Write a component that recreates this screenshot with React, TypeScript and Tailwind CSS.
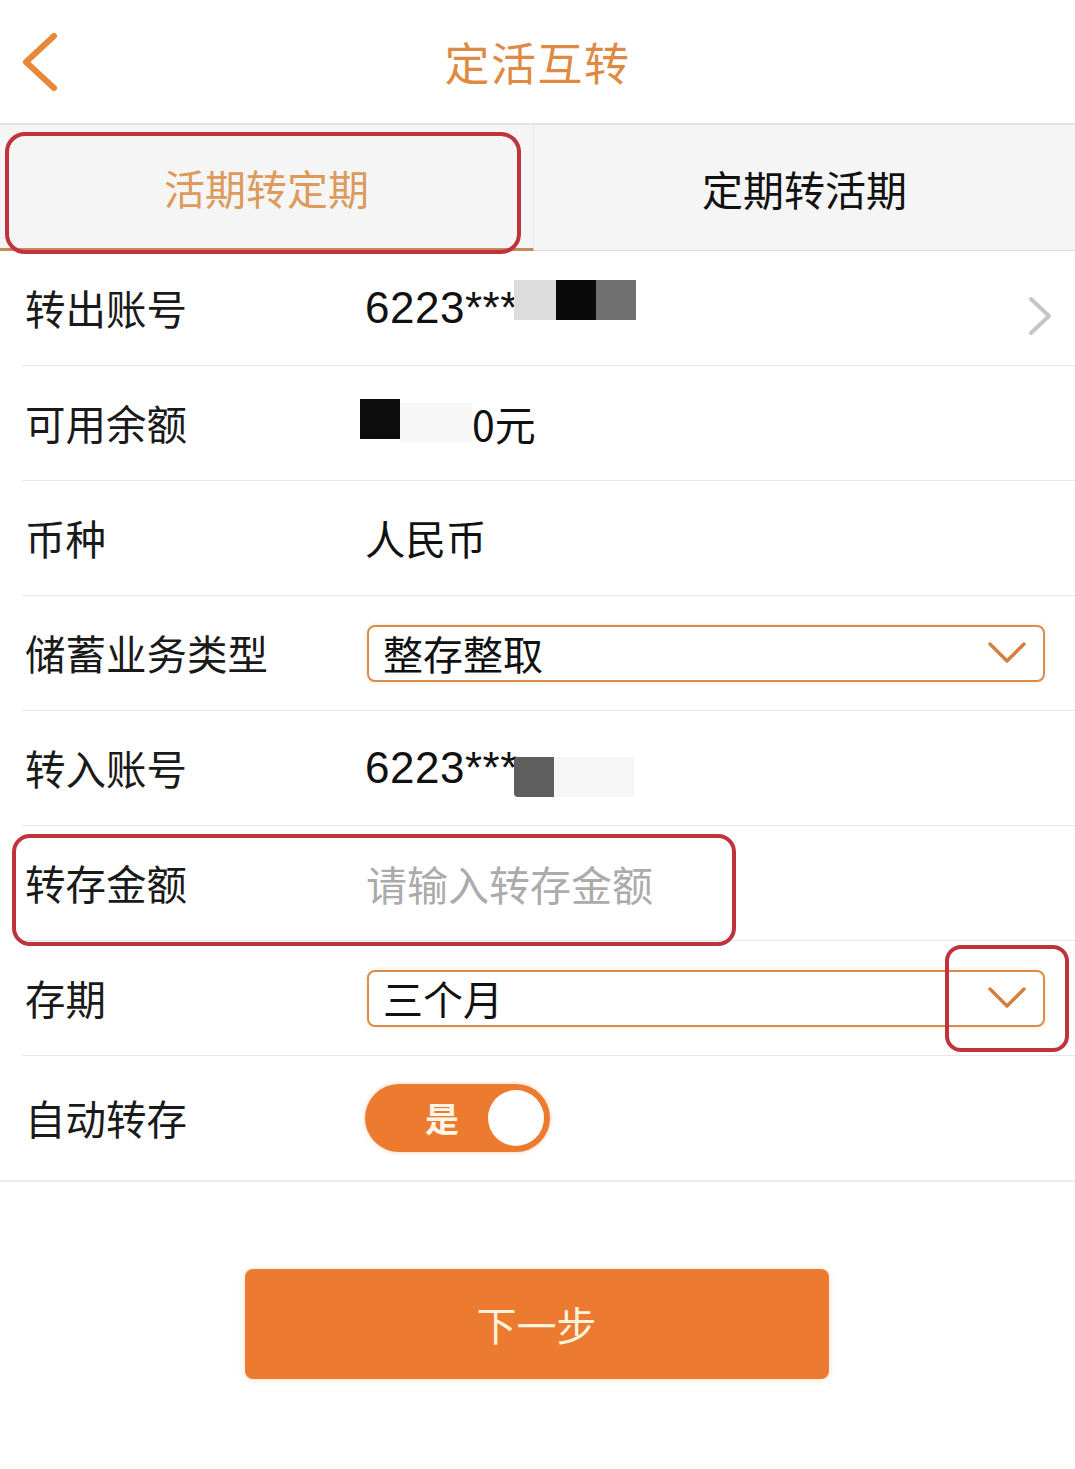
import type { ReactNode } from "react";

const font = { fontFamily: '"Noto Sans CJK SC", "Liberation Sans", sans-serif' };
const digits = { fontFamily: '"Liberation Sans", sans-serif' };

function Row({ label, children, last }: { label: string; children?: ReactNode; last?: boolean }) {
  return (
    <div className={last ? "flex h-[126px] items-center border-b-2 border-[#ececec] pl-[25px]" : "ml-[22px] flex h-[115px] items-center border-b border-[#e6e6e6] pl-[3px]"}>
      <div className="w-[340px] shrink-0 text-[40.5px] leading-none text-[#1a1a1a]">{label}</div>
      <div className="flex min-w-0 flex-1 items-center">{children}</div>
    </div>
  );
}

function Select({ value }: { value: string }) {
  return (
    <div className="flex h-[57px] w-[678px] items-center justify-between rounded-[8px] border-2 border-[#d98c4c] pl-[14px] pr-[16px] shadow-[0_0_4px_rgba(236,140,60,0.25)]">
      <span className="text-[40px] leading-none text-[#111]">{value}</span>
      <svg width="40" height="24" viewBox="0 0 40 24" fill="none">
        <path d="M3 3 L20 20 L37 3" stroke="#d3803f" strokeWidth="3.5" strokeLinecap="round" strokeLinejoin="round" />
      </svg>
    </div>
  );
}

export default function App() {
  return (
    <div className="relative min-h-[1469px] w-[1075px] bg-white" style={font}>
      {/* header */}
      <div className="relative flex h-[125px] items-center justify-center border-b-2 border-[#e4e4e4]">
        <svg className="absolute left-[20px] top-[32px]" width="40" height="60" viewBox="0 0 40 60" fill="none">
          <path d="M34 4 L6 30 L34 56" stroke="#e8883a" strokeWidth="6" strokeLinecap="round" strokeLinejoin="round" />
        </svg>
        <h1 className="text-[45px] font-normal leading-none tracking-[1.5px] text-[#df8a44]">定活互转</h1>
      </div>

      {/* tabs */}
      <div className="flex h-[126px] bg-[#f5f5f5]">
        <div className="flex w-[534px] items-center justify-center border-b-[3px] border-r border-b-[#c98a58] border-r-[#e6e6e6] pt-[2px] text-[41px] leading-none text-[#dc9a5c]">
          活期转定期
        </div>
        <div className="flex flex-1 items-center justify-center border-b border-[#dcdcdc] pt-[2px] text-[41px] leading-none text-[#111]">
          定期转活期
        </div>
      </div>

      <Row label="转出账号">
        <span className="text-[44px] leading-none tracking-[0.5px] text-[#111]" style={digits}>6223***</span>
        <div className="ml-[-4px] mt-[-16px] flex h-[40px]">
          <div className="w-[42px] bg-[#dcdcdc]" />
          <div className="w-[40px] bg-[#0a0a0a]" />
          <div className="w-[40px] bg-[#707070]" />
        </div>
        <svg className="ml-auto mr-[22px] mt-[16px]" width="26" height="40" viewBox="0 0 26 40" fill="none">
          <path d="M4 3 L22 20 L4 37" stroke="#c6c6c6" strokeWidth="4" strokeLinecap="round" strokeLinejoin="round" />
        </svg>
      </Row>

      <Row label="可用余额">
        <div className="ml-[-5px] mt-[-8px] h-[40px] w-[40px] bg-[#0c0c0c]" />
        <div className="h-[40px] w-[72px] bg-[#f7f7f7]" />
        <span className="text-[41px] leading-none text-[#111]">0元</span>
      </Row>

      <Row label="币种">
        <span className="text-[40.5px] leading-none text-[#111]">人民币</span>
      </Row>

      <Row label="储蓄业务类型">
        <div className="ml-[2px]">
          <Select value="整存整取" />
        </div>
      </Row>

      <Row label="转入账号">
        <span className="text-[44px] leading-none tracking-[0.5px] text-[#111]" style={digits}>6223***</span>
        <div className="ml-[-4px] mt-[18px] flex h-[40px]">
          <div className="w-[40px] rounded-l-[4px] bg-[#5e5e5e]" />
          <div className="w-[80px] bg-[#f6f6f6]" />
        </div>
      </Row>

      <Row label="转存金额">
        <span className="ml-[1px] text-[41px] leading-none text-[#ababab]">请输入转存金额</span>
      </Row>

      <Row label="存期">
        <div className="ml-[2px]">
          <Select value="三个月" />
        </div>
      </Row>

      <Row label="自动转存" last>
        <div className="flex h-[68px] w-[185px] items-center justify-between rounded-full bg-[#ec7b30] pl-[60px] pr-[6px] shadow-[0_0_4px_rgba(236,123,48,0.4)]">
          <span className="text-[34px] font-bold leading-none text-[#fff6e8]">是</span>
          <div className="h-[56px] w-[56px] rounded-full bg-white" />
        </div>
      </Row>

      {/* next button */}
      <div className="flex justify-center pt-[87px]">
        <button className="ml-[-2px] flex h-[110px] w-[584px] items-center justify-center rounded-[8px] bg-[#ec7a30] text-[40px] leading-none text-[#fff3dc] shadow-[0_1px_6px_rgba(236,122,48,0.25)]">
          下一步
        </button>
      </div>

      {/* red annotation boxes */}
      <div className="pointer-events-none absolute left-[5px] top-[132px] h-[122px] w-[516px] rounded-[20px] border-4 border-[#c0323c]" />
      <div className="pointer-events-none absolute left-[12px] top-[834px] h-[112px] w-[724px] rounded-[18px] border-4 border-[#c0323c]" />
      <div className="pointer-events-none absolute left-[945px] top-[945px] h-[107px] w-[124px] rounded-[16px] border-4 border-[#c0323c]" />
    </div>
  );
}
